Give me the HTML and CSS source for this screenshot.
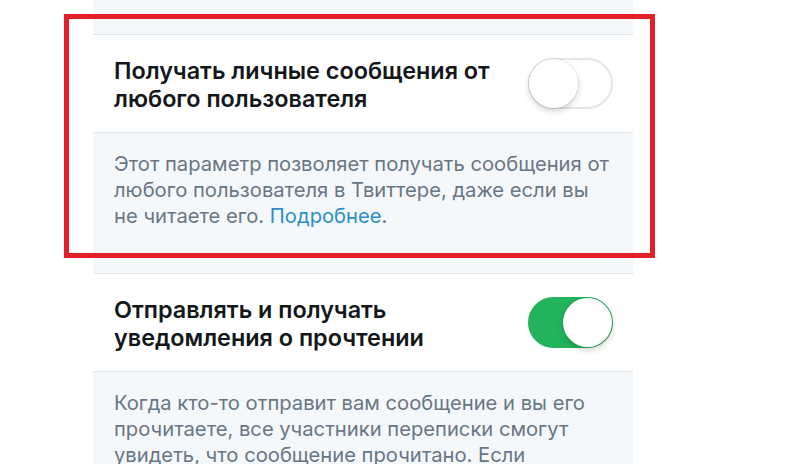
FILE: index.html
```html
<!DOCTYPE html>
<html lang="ru">
<head>
<meta charset="utf-8">
<link rel="stylesheet" href="styles.css">
</head>
<body>
<div class="page">
  <div class="column">
    <div class="desc desc-top"></div>
    <div class="row">
      <div class="title">Получать личные сообщения от любого пользователя</div>
      <div class="toggle"><div class="knob"></div></div>
    </div>
    <div class="desc">
      <p class="text">Этот параметр позволяет получать сообщения от любого пользователя в Твиттере, даже если вы не читаете его. <a class="link" href="#">Подробнее</a>.</p>
    </div>
    <div class="row">
      <div class="title">Отправлять и получать уведомления о прочтении</div>
      <div class="toggle on"><div class="knob"></div></div>
    </div>
    <div class="desc desc-last">
      <p class="text">Когда кто-то отправит вам сообщение и вы его прочитаете, все участники переписки смогут увидеть, что сообщение прочитано. Если</p>
    </div>
  </div>
  <div class="highlight"></div>
</div>
</body>
</html>
```
FILE: styles.css
```css
html, body {
  margin: 0;
  padding: 0;
  background: #ffffff;
  height: 464px;
  overflow: hidden;
}
.page {
  position: relative;
  height: 464px;
  overflow: hidden;
  font-family: Inter, "Noto Sans", sans-serif;
}
.column {
  margin-left: 93px;
  width: 540px;
  display: flex;
  flex-direction: column;
}
.desc {
  background: #f5f8fa;
  border-bottom: 1px solid #e1e8ed;
  padding: 18px 20px 44px 21px;
}
.desc-top {
  height: 35px;
  padding: 0;
  box-sizing: border-box;
}
.desc-last {
  padding-bottom: 0;
  border-bottom: none;
  height: 92px;
  box-sizing: border-box;
}
.row {
  background: #ffffff;
  border-bottom: 1px solid #e1e8ed;
  height: 98px;
  box-sizing: border-box;
  display: flex;
  align-items: center;
  justify-content: space-between;
  padding: 3px 20px 0 21px;
}
.title {
  font-size: 23.4px;
  font-weight: 600;
  line-height: 28px;
  color: #14171a;
  width: 400px;
}
.text {
  margin: 0;
  font-size: 20.2px;
  line-height: 26px;
  color: #687684;
}
.link {
  color: #2b8fc7;
  text-decoration: none;
}
.toggle {
  position: relative;
  width: 85px;
  height: 51px;
  box-sizing: border-box;
  border-radius: 26px;
  border: 2px solid #e6e6e6;
  background: #ffffff;
  flex-shrink: 0;
  margin-top: -3px;
}
.toggle .knob {
  position: absolute;
  top: -1px;
  left: -1px;
  width: 49px;
  height: 49px;
  border-radius: 50%;
  background: #ffffff;
  box-shadow: 0 3px 6px rgba(0,0,0,0.18), 0 0 0 1px rgba(0,0,0,0.06);
}
.toggle.on {
  background: #22b35c;
  border-color: #22b35c;
}
.toggle.on .knob {
  left: auto;
  right: -1px;
}
.highlight {
  position: absolute;
  left: 64px;
  top: 14px;
  width: 591px;
  height: 244px;
  box-sizing: border-box;
  border: 5px solid #e3202a;
  pointer-events: none;
}
```
